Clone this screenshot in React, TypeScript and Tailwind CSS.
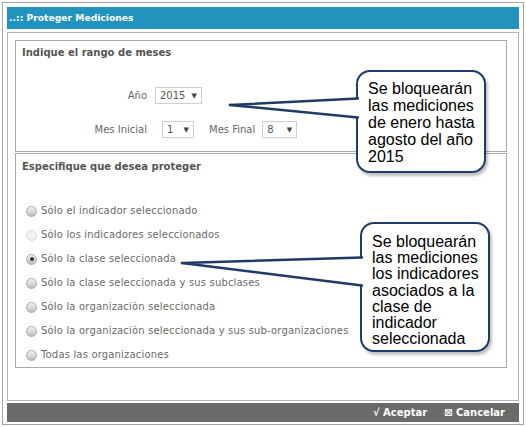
import React from 'react'

const OPTIONS = [
  { label: 'Sólo el indicador seleccionado', state: 'normal' },
  { label: 'Sólo los indicadores seleccionados', state: 'faint' },
  { label: 'Sólo la clase seleccionada', state: 'checked' },
  { label: 'Sólo la clase seleccionada y sus subclases', state: 'normal' },
  { label: 'Sólo la organización seleccionada', state: 'normal' },
  { label: 'Sólo la organización seleccionada y sus sub-organizaciones', state: 'normal' },
  { label: 'Todas las organizaciones', state: 'normal' },
]

function Radio({ state }: { state: string }) {
  if (state === 'faint') {
    return <span className="w-[11px] h-[11px] rounded-full border border-[#dcdcdc] bg-[#f2f2f2]" />
  }
  return (
    <span className="w-[11px] h-[11px] rounded-full border border-[#a9a9a9] bg-gradient-to-b from-[#f4f4f4] to-[#bdbdbd] flex items-center justify-center">
      {state === 'checked' && <span className="w-[4px] h-[4px] rounded-full bg-[#333]" />}
    </span>
  )
}

function Select({ value, w }: { value: string; w: string }) {
  return (
    <div className={`${w} h-[17px] border border-[#cfcfcf] bg-white flex items-center justify-between px-[4px] text-[#555]`}>
      <span>{value}</span>
      <span className="text-[7px] text-[#444]">▼</span>
    </div>
  )
}

export default function App() {
  return (
    <div className="relative w-[526px] h-[427px] bg-white overflow-hidden" style={{ fontFamily: '"DejaVu Sans", Verdana, sans-serif' }}>
      <div className="m-[2px] border border-[#a4a4a4] px-[4px] pt-[4px] pb-[2px] text-[10px] leading-[14px]">
        {/* header */}
        <div className="h-[22px] bg-[#2193be] text-white font-bold text-[9.2px] flex items-center pl-[2px]">..:: Proteger Mediciones</div>

        {/* panel */}
        <div className="mt-[3px] h-[369px] border border-[#b4b4b4] pl-[7px] pr-[11px] pt-[7px]">
          <div className="h-[112px] border border-[#a8a8a8] pl-[6px] pt-[5px]">
            <div className="font-bold text-[#555]">Indique el rango de meses</div>
            <div className="mt-[27px] flex items-center -ml-[6px] text-[#666]">
              <div className="w-[131px] text-right">Año</div>
              <div className="ml-[8px]"><Select value="2015" w="w-[47px]" /></div>
            </div>
            <div className="mt-[17px] flex items-center -ml-[6px] text-[#666]">
              <div className="w-[131px] text-right">Mes Inicial</div>
              <div className="ml-[15px]"><Select value="1" w="w-[32px]" /></div>
              <div className="ml-[15px]">Mes Final</div>
              <div className="ml-[7px]"><Select value="8" w="w-[35px]" /></div>
            </div>
          </div>

          <div className="mt-[1px] h-[215px] border border-[#a8a8a8] pl-[6px] pt-[6px]">
            <div className="font-bold text-[#555]">Especifique que desea proteger</div>
            <div className="mt-[25px] flex flex-col">
              {OPTIONS.map((o) => (
                <div key={o.label} className="h-[24px] flex items-center gap-[4px] pl-[4px] text-[#6a6a6a] tracking-[0.17px]">
                  <Radio state={o.state} />
                  <span>{o.label}</span>
                </div>
              ))}
            </div>
          </div>
        </div>

        {/* footer */}
        <div className="mt-[2px] h-[19px] bg-[#6a6a6a] flex items-center justify-end gap-[17px] pr-[14px] text-white font-bold">
          <span>√ Aceptar</span>
          <span>⊠ Cancelar</span>
        </div>
      </div>

      {/* callouts */}
      <div
        className="absolute left-[356px] top-[70px] w-[130px] h-[103px] rounded-[14px] border-2 border-[#213a66] bg-white shadow-[2px_3px_3px_rgba(0,0,0,0.25)] pl-[10px] pt-[8px] text-[16px] leading-[17px] text-black"
        style={{ fontFamily: '"Liberation Sans", Arial, sans-serif' }}
      >
        Se bloquearán<br />las mediciones<br />de enero hasta<br />agosto del año<br />2015
      </div>
      <div
        className="absolute left-[360px] top-[222px] w-[130px] h-[130px] rounded-[14px] border-2 border-[#213a66] bg-white shadow-[2px_3px_3px_rgba(0,0,0,0.25)] pl-[10px] pt-[10px] text-[16px] leading-[16.2px] text-black"
        style={{ fontFamily: '"Liberation Sans", Arial, sans-serif' }}
      >
        Se bloquearán<br />las mediciones<br />los indicadores<br />asociados a la<br />clase de<br />indicador<br />seleccionada
      </div>

      <svg className="absolute inset-0 pointer-events-none" width="526" height="427">
        <polygon points="230,105 361,98 361,118" fill="white" />
        <line x1="230" y1="105" x2="358" y2="98.5" stroke="#213a66" strokeWidth="2.5" strokeLinecap="round" />
        <line x1="230" y1="105" x2="358" y2="117.5" stroke="#213a66" strokeWidth="2.5" strokeLinecap="round" />
        <polygon points="182,263 365,257 365,286" fill="white" />
        <line x1="182" y1="263" x2="362" y2="257.5" stroke="#213a66" strokeWidth="2.5" strokeLinecap="round" />
        <line x1="182" y1="263" x2="362" y2="285.5" stroke="#213a66" strokeWidth="2.5" strokeLinecap="round" />
      </svg>
    </div>
  )
}
